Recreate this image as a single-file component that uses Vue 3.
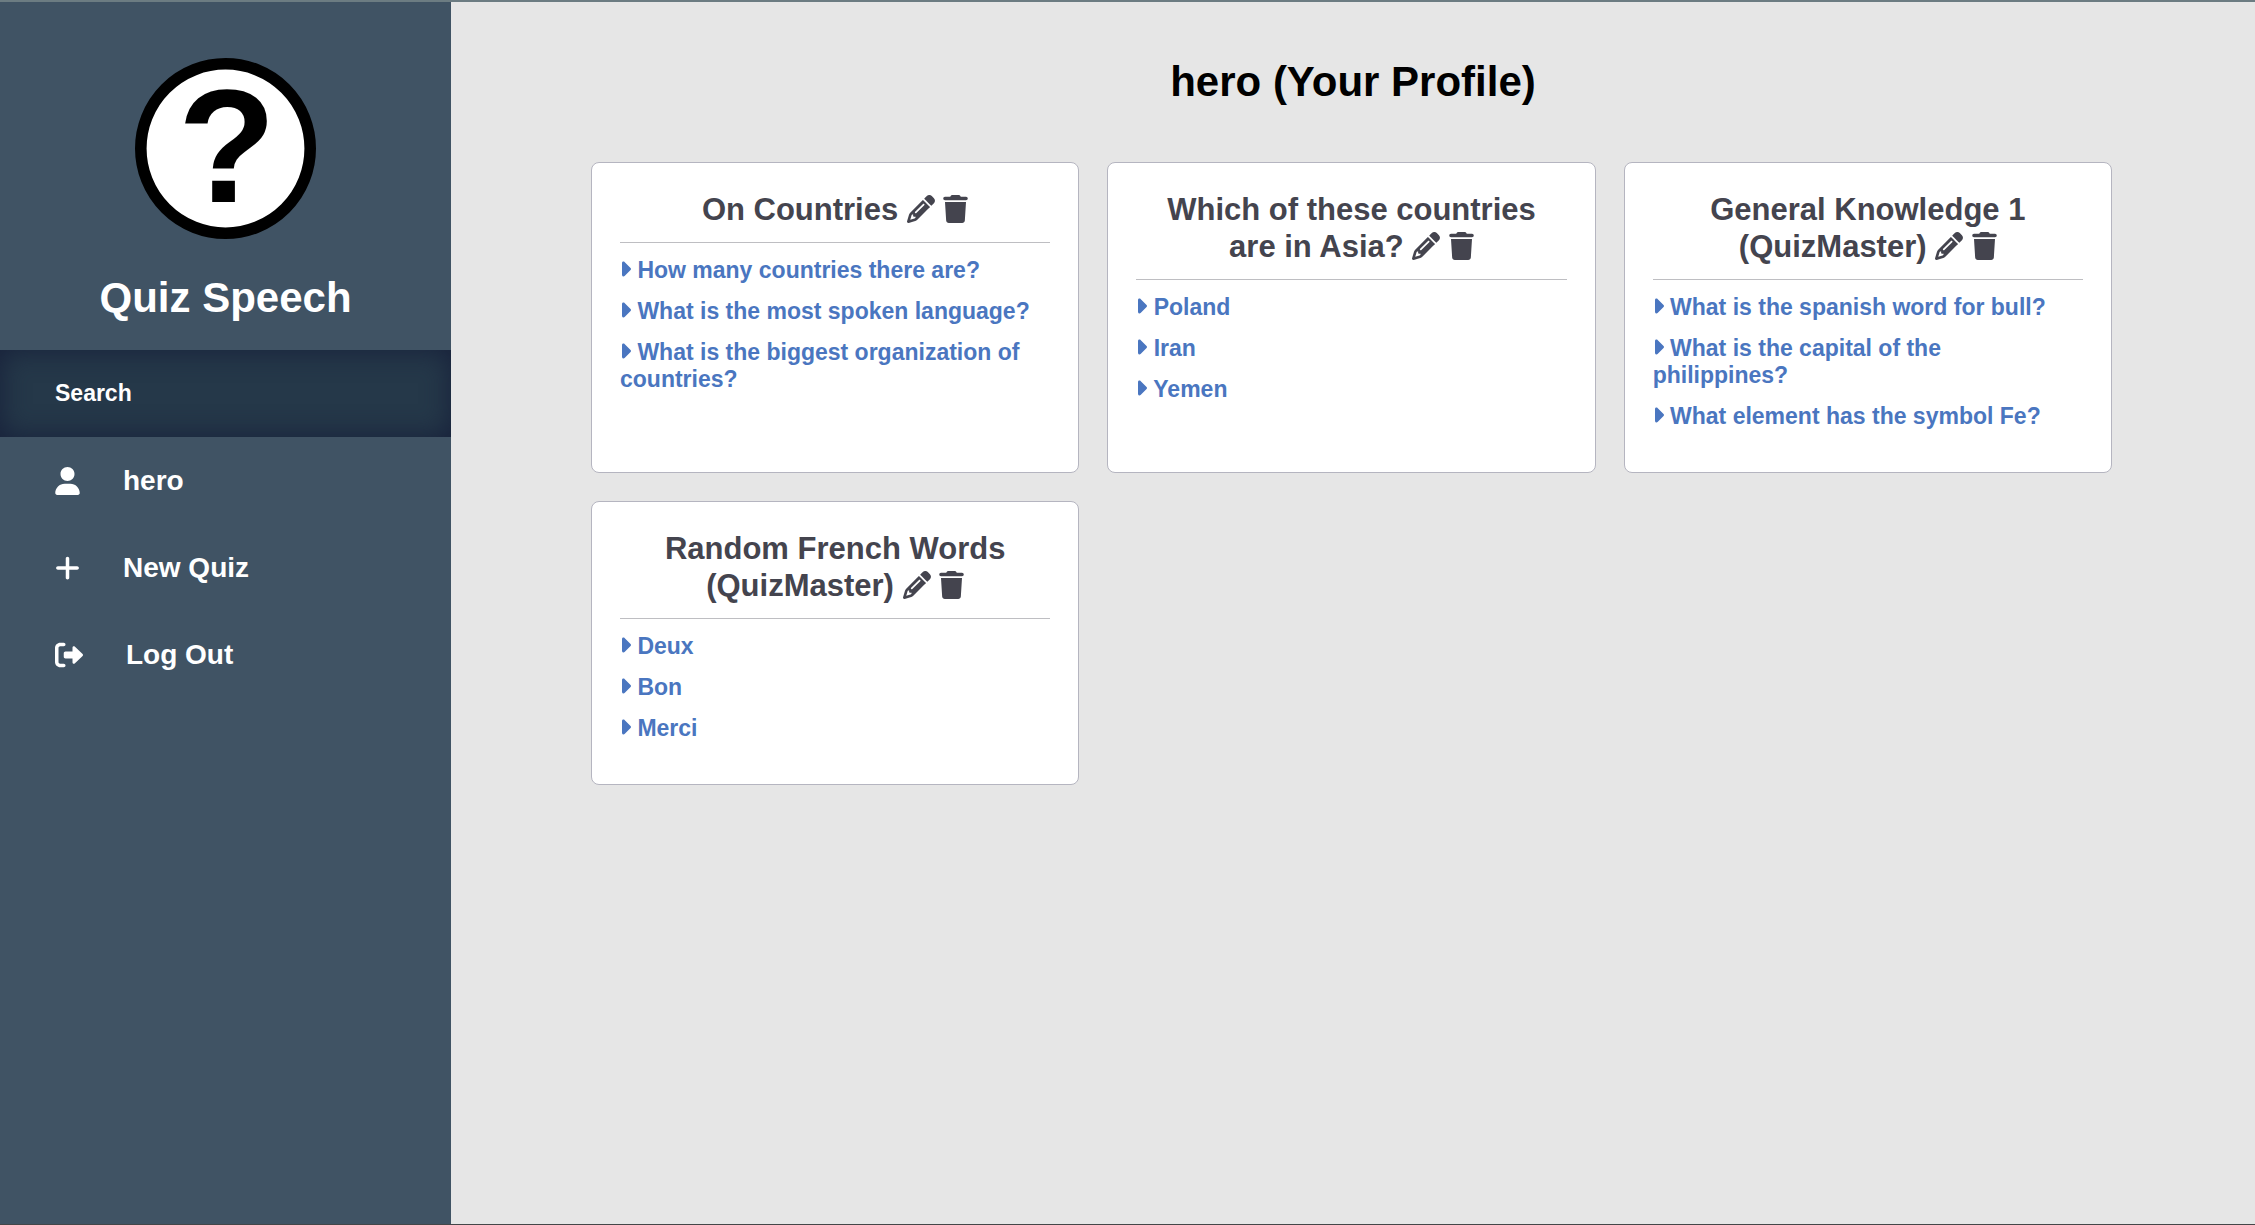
<script setup>
const navItems = [
  {
    label: 'hero',
    box: '0 0 448 512',
    wide: false,
    path: 'M224 256c70.7 0 128-57.3 128-128S294.700 0 224 0 96 57.300 96 128s57.300 128 128 128zM274.700 304H173.300C77.600 304 0 381.600 0 477.300 0 496.500 15.500 512 34.700 512h378.700c19.100 0 34.600-15.500 34.600-34.700C448 381.600 370.400 304 274.700 304z',
  },
  {
    label: 'New Quiz',
    box: '0 0 448 512',
    wide: false,
    path: 'M256 80c0-17.700-14.300-32-32-32s-32 14.300-32 32V224H48c-17.700 0-32 14.300-32 32s14.300 32 32 32H192V432c0 17.700 14.300 32 32 32s32-14.300 32-32V288H400c17.700 0 32-14.300 32-32s-14.300-32-32-32H256V80z',
  },
  {
    label: 'Log Out',
    box: '0 0 512 512',
    wide: true,
    path: 'M96 480h64c17.700 0 32-14.300 32-32s-14.300-32-32-32H96c-17.700 0-32-14.300-32-32V128c0-17.700 14.300-32 32-32h64c17.700 0 32-14.300 32-32s-14.300-32-32-32H96C43 32 0 75 0 128v256c0 53 43 96 96 96zM504.800 238.500l-144.100-136c-7-6.600-17.200-8.400-26-4.600-8.800 3.800-14.500 12.500-14.500 22.100l-.1 72H192c-17.700 0-32 14.300-32 32v64c0 17.700 14.300 32 32 32h128.100l.1 72c0 9.600 5.700 18.200 14.500 22 8.800 3.800 19 2 26-4.600l144.100-136c9.600-9 9.600-25.800 0-34.900z',
  },
]

const quizzes = [
  {
    title: 'On Countries',
    questions: [
      'How many countries there are?',
      'What is the most spoken language?',
      'What is the biggest organization of countries?',
    ],
  },
  { title: 'Which of these countries are in Asia?', questions: ['Poland', 'Iran', 'Yemen'] },
  {
    title: 'General Knowledge 1 (QuizMaster)',
    questions: [
      'What is the spanish word for bull?',
      'What is the capital of the philippines?',
      'What element has the symbol Fe?',
    ],
  },
  { title: 'Random French Words (QuizMaster)', questions: ['Deux', 'Bon', 'Merci'] },
]
</script>

<template>
  <div class="page">
    <aside class="sidebar">
      <svg class="logo" viewBox="0 0 181 181" aria-hidden="true">
        <circle cx="90.5" cy="90.5" r="84.7" fill="#fff" stroke="#000" stroke-width="11.6" />
        <text class="logo-mark" x="92" y="144" text-anchor="middle">?</text>
      </svg>
      <h1 class="brand">Quiz Speech</h1>
      <input class="search" type="text" placeholder="Search" aria-label="Search" />
      <nav class="nav">
        <a v-for="item in navItems" :key="item.label" class="nav-link" href="#">
          <svg class="nav-icon" :class="{ wide: item.wide }" :viewBox="item.box" aria-hidden="true">
            <path :d="item.path" />
          </svg>
          <span>{{ item.label }}</span>
        </a>
      </nav>
    </aside>

    <main class="content">
      <h2 class="heading">hero (Your Profile)</h2>
      <div class="grid">
        <article v-for="quiz in quizzes" :key="quiz.title" class="card">
          <h3 class="card-title">
            {{ quiz.title }}
            <button class="icon-button" type="button" aria-label="Edit quiz">
              <svg class="pencil" viewBox="0 0 512 512" aria-hidden="true">
                <path d="M410.300 231l11.300-11.300-33.900-33.900-62.100-62.100L291.700 89.800l-11.300 11.300-22.600 22.600L58.600 322.900c-10.400 10.400-18 23.300-22.200 37.400L1 480.700c-2.500 8.400-.2 17.500 6.100 23.700s15.300 8.500 23.700 6.100l120.300-35.400c14.100-4.200 27-11.800 37.400-22.200L387.700 253.700 410.300 231zM160 399.400l-9.100 22.700c-4 3.100-8.500 5.400-13.300 6.900L59.400 452l23-78.100c1.400-4.900 3.800-9.400 6.900-13.300l22.700-9.100v32c0 8.800 7.200 16 16 16h32zM362.700 18.700L348.300 33.200 325.700 55.800 314.300 67.100l33.900 33.900 62.100 62.100 33.900 33.900 11.300-11.300 22.600-22.600 14.500-14.500c25-25 25-65.500 0-90.500L453.300 18.700c-25-25-65.500-25-90.500 0zm-47.400 168l-144 144c-6.200 6.200-16.400 6.200-22.600 0s-6.200-16.400 0-22.600l144-144c6.200-6.200 16.400-6.200 22.600 0s6.200 16.400 0 22.600z" />
              </svg>
            </button>
            {{ ' ' }}
            <button class="icon-button" type="button" aria-label="Delete quiz">
              <svg class="trash" viewBox="0 0 448 512" aria-hidden="true">
                <path d="M135.200 17.700C140.600 6.800 151.700 0 163.800 0H284.200c12.100 0 23.200 6.800 28.600 17.700L320 32h96c17.700 0 32 14.300 32 32s-14.300 32-32 32H32C14.300 96 0 81.700 0 64S14.300 32 32 32h96l7.200-14.300zM32 128H416L394.800 467c-1.600 25.300-22.600 45-47.900 45H101.100c-25.300 0-46.300-19.700-47.900-45L32 128z" />
              </svg>
            </button>
          </h3>
          <ul class="questions">
            <li v-for="question in quiz.questions" :key="question">
              <a href="#">
                <svg class="caret" viewBox="0 0 256 512" aria-hidden="true">
                  <path d="M246.600 278.600c12.500-12.500 12.500-32.800 0-45.300l-128-128c-9.200-9.200-22.900-11.900-34.900-6.900S64 115.100 64 128v256c0 12.900 7.800 24.600 19.800 29.600s25.700 2.200 34.900-6.900l128-128z" />
                </svg>
                {{ question }}
              </a>
            </li>
          </ul>
        </article>
      </div>
    </main>
  </div>
</template>

<style>
body {
  margin: 0;
}
</style>

<style scoped>
.page {
  box-sizing: border-box;
  display: flex;
  min-height: 100vh;
  border-top: 2px solid #6c7c82;
  border-bottom: 1px solid #444648;
  background: #e6e6e6;
  font-family: "Liberation Sans", Arial, sans-serif;
  font-weight: 700;
}

.sidebar {
  box-sizing: border-box;
  display: flex;
  flex: 0 0 20%;
  flex-direction: column;
  padding-top: 56px;
  background: #405364;
  color: #fff;
}

.logo {
  align-self: center;
  width: 181px;
  height: 181px;
  overflow: visible;
}

.logo-mark {
  font-size: 161px;
  font-weight: 700;
}

.brand {
  margin: 35px 0 28px;
  font-size: 42px;
  line-height: 48px;
  text-align: center;
}

.search {
  box-sizing: border-box;
  width: 100%;
  height: 87px;
  padding: 0 55px;
  border: 0;
  border-radius: 0;
  background: #253849;
  box-shadow: inset 0 0 28px #17203a;
  color: #fff;
  font: inherit;
  font-size: 23px;
}

.search::placeholder {
  color: #fff;
  opacity: 1;
}

.nav {
  display: flex;
  flex-direction: column;
}

.nav-link {
  display: flex;
  align-items: center;
  gap: 43px;
  height: 87px;
  padding: 0 55px;
  color: inherit;
  font-size: 28px;
  text-decoration: none;
}

.nav-icon {
  width: 25px;
  height: 28px;
  fill: currentColor;
}

.nav-icon.wide {
  width: 28px;
}

.content {
  flex: 1;
  min-width: 0;
  padding: 56px 0;
}

.heading {
  margin: 0 0 56px;
  color: #000;
  font-size: 42px;
  line-height: 48px;
  text-align: center;
}

.grid {
  display: grid;
  grid-template-columns: repeat(3, minmax(0, 1fr));
  gap: 28px;
  margin: 0 143px 0 140px;
}

.card {
  padding: 28px;
  border: 1px solid #b5b5c0;
  border-radius: 8px;
  background: #fff;
}

.card-title {
  margin: 0;
  padding: 0 8px 14px;
  border-bottom: 1px solid #bebec2;
  color: #44444e;
  font-size: 31px;
  line-height: 37px;
  text-align: center;
}

.icon-button {
  height: 28px;
  padding: 0;
  border: 0;
  background: none;
  color: inherit;
  line-height: 0;
  vertical-align: -3px;
  cursor: pointer;
}

.icon-button svg {
  display: block;
  height: 28px;
  fill: currentColor;
}

.pencil {
  width: 28px;
}

.trash {
  width: 25px;
}

.questions {
  margin: 0;
  padding: 14px 8px 0 0;
  list-style: none;
  color: #4a76c0;
  font-size: 23px;
  line-height: 27px;
}

.questions li {
  margin-bottom: 14px;
}

.questions a {
  color: inherit;
  text-decoration: none;
}

.caret {
  width: 12px;
  height: 24px;
  margin: -3px 0 -3px -1px;
  fill: currentColor;
  vertical-align: baseline;
}
</style>
